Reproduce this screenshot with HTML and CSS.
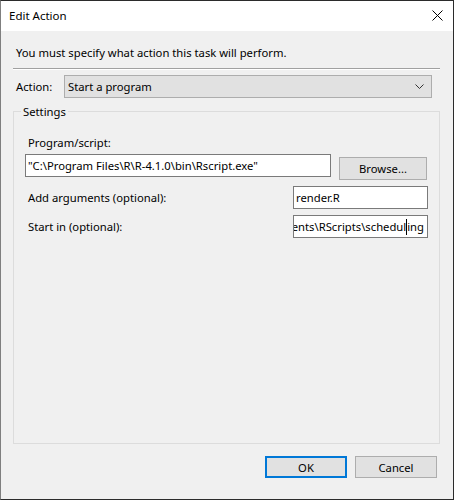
FILE: index.html
```html
<!DOCTYPE html>
<html lang="en">
<head>
<meta charset="utf-8">
<title>Edit Action</title>
<link rel="stylesheet" href="styles.css">
</head>
<body>
<div class="window">
  <div class="titlebar">
    <span class="title">Edit Action</span>
    <span class="close" aria-label="Close">
      <svg width="11" height="11" viewBox="0 0 11 11"><path d="M0.5 0.5L10.5 10.5M10.5 0.5L0.5 10.5" stroke="#000" stroke-width="1" fill="none"/></svg>
    </span>
  </div>
  <div class="content">
    <p class="intro">You must specify what action this task will perform.</p>
    <div class="separator"></div>
    <div class="action-row">
      <span class="action-label">Action:</span>
      <div class="combo">
        <span>Start a program</span>
        <svg class="chevron" width="9" height="6" viewBox="0 0 9 6"><path d="M0.5 0.5L4.5 4.5L8.5 0.5" stroke="#333" stroke-width="1" fill="none"/></svg>
      </div>
    </div>
    <fieldset class="group">
      <legend>Settings</legend>
      <div class="field-label first">Program/script:</div>
      <div class="program-row">
        <div class="textbox program">"C:\Program Files\R\R-4.1.0\bin\Rscript.exe"</div>
        <div class="button browse">Browse...</div>
      </div>
      <div class="opt-row args">
        <span class="opt-label">Add arguments (optional):</span>
        <div class="textbox short">render.R</div>
      </div>
      <div class="opt-row start">
        <span class="opt-label">Start in (optional):</span>
        <div class="textbox short scrolled"><span class="scroll-text">Documents\RScripts\schedul<span class="caret"></span>ing</span></div>
      </div>
    </fieldset>
    <div class="buttons">
      <div class="button ok">OK</div>
      <div class="button cancel">Cancel</div>
    </div>
  </div>
</div>
</body>
</html>
```
FILE: styles.css
```css
html, body {
  margin: 0;
  padding: 0;
}
body {
  width: 454px;
  height: 500px;
  font-family: "Noto Sans", "Open Sans", sans-serif;
  font-size: 11.25px;
  color: #000;
  background: #1f2a33;
}
.window {
  box-sizing: border-box;
  width: 454px;
  height: 500px;
  border: 1px solid #2b2b2b;
  border-left-color: #7f7f7f;
  display: flex;
  flex-direction: column;
}
.titlebar {
  height: 30px;
  flex: none;
  background: #fff;
  display: flex;
  align-items: center;
  justify-content: space-between;
  padding: 0 10px 0 8px;
}
.title {
  font-size: 11.5px;
  line-height: 16px;
  margin-top: -1px;
}
.close {
  display: flex;
  margin-top: -1px;
}
.content {
  flex: 1;
  background: #f0f0f0;
  display: flex;
  flex-direction: column;
  padding: 0 13px 0 12px;
}
.intro {
  margin: 14px 0 0 3px;
  line-height: 15px;
}
.separator {
  margin-top: 8px;
  height: 1px;
  background: #a0a0a0;
  border-bottom: 1px solid #fff;
}
.action-row {
  display: flex;
  align-items: center;
  margin-top: 5px;
}
.action-label {
  width: 51px;
  padding-left: 3px;
  box-sizing: border-box;
}
.combo {
  box-sizing: border-box;
  width: 368px;
  height: 23px;
  background: #e1e1e1;
  border: 1px solid #adadad;
  display: flex;
  align-items: center;
  justify-content: space-between;
  padding: 0 7px 0 3px;
}
.chevron {
  margin-top: 1px;
}
.group {
  margin: 6px 0 0 0;
  padding: 0 11px 0 11px;
  border: 1px solid #dcdcdc;
  height: 340px;
  box-sizing: border-box;
  min-width: 0;
}
.group legend {
  padding: 0 2px;
  margin-left: -4px;
  line-height: 15px;
}
.field-label {
  padding-left: 3px;
  line-height: 15px;
}
.field-label.first {
  margin-top: 16px;
}
.program-row {
  display: flex;
  align-items: flex-start;
  margin-top: 4px;
  padding-right: 1px;
}
.textbox {
  box-sizing: border-box;
  height: 23px;
  background: #fff;
  border: 1px solid #7a7a7a;
  display: flex;
  align-items: center;
  padding: 0 2px;
  white-space: nowrap;
  overflow: hidden;
}
.textbox.program {
  width: 306px;
}
.button {
  box-sizing: border-box;
  background: #e1e1e1;
  border: 1px solid #adadad;
  display: flex;
  align-items: center;
  justify-content: center;
}
.browse {
  width: 88px;
  height: 23px;
  margin: 3px 0 0 8px;
}
.opt-row {
  display: flex;
  align-items: center;
  justify-content: space-between;
}
.opt-row.args {
  margin-top: 6px;
}
.opt-row.start {
  margin-top: 6px;
}
.opt-label {
  padding-left: 3px;
}
.textbox.short {
  width: 135px;
}
.textbox.scrolled {
  justify-content: flex-end;
  padding-right: 3px;
}
.scroll-text {
  flex: none;
  display: flex;
  align-items: center;
}
.caret {
  display: inline-block;
  width: 1px;
  height: 16px;
  background: #000;
}
.buttons {
  display: flex;
  justify-content: flex-end;
  gap: 8px;
  margin: 12px 3px 0 0;
}
.button.ok, .button.cancel {
  width: 82px;
  height: 22px;
}
.button.ok {
  border: 2px solid #0078d7;
}
```
